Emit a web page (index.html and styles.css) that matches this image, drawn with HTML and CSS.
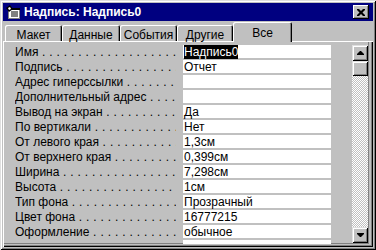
FILE: index.html
```html
<!DOCTYPE html>
<html lang="ru">
<head>
  <meta charset="UTF-8">
  <title>Надпись: Надпись0</title>
  <link rel="stylesheet" href="styles.css">
</head>
<body>
  <div class="window">
    <!-- title bar -->
    <div class="titlebar">
      <svg class="app-icon" viewBox="0 0 16 16" width="16" height="16">
        <rect x="3.5" y="4.5" width="11" height="10" fill="#fff" stroke="#808080"/>
        <rect x="3" y="4" width="12" height="2" fill="#000"/>
        <path d="M6 8h7M6 10h7M6 12h7" stroke="#000" stroke-width="1"/>
        <path d="M1 4 L5 1 L8 5 L4 8 Z" fill="#000"/>
        <path d="M3 4 L5 3 L6 5 L4 6 Z" fill="#fff"/>
      </svg>
      <span class="title">Надпись: Надпись0</span>
      <button class="close">
        <svg viewBox="0 0 8 7" width="8" height="7">
          <path d="M0 0h2l2 2 2-2h2v1L5.5 3.5 8 6v1H6L4 5 2 7H0V6l2.5-2.5L0 1z" fill="#000"/>
        </svg>
      </button>
    </div>

    <!-- tabs -->
    <div class="tabs">
      <div class="tab">Макет</div>
      <div class="tab">Данные</div>
      <div class="tab">События</div>
      <div class="tab">Другие</div>
      <div class="tab active">Все</div>
    </div>

    <!-- property list -->
    <div class="panel">
      <div class="list">
        <div class="rows">
          <div class="row"><span class="label">Имя</span><span class="value"><span class="selected">Надпись0</span></span></div>
          <div class="row"><span class="label">Подпись</span><span class="value">Отчет</span></div>
          <div class="row"><span class="label">Адрес гиперссылки</span><span class="value"></span></div>
          <div class="row"><span class="label">Дополнительный адрес</span><span class="value"></span></div>
          <div class="row"><span class="label">Вывод на экран</span><span class="value">Да</span></div>
          <div class="row"><span class="label">По вертикали</span><span class="value">Нет</span></div>
          <div class="row"><span class="label">От левого края</span><span class="value">1,3см</span></div>
          <div class="row"><span class="label">От верхнего края</span><span class="value">0,399см</span></div>
          <div class="row"><span class="label">Ширина</span><span class="value">7,298см</span></div>
          <div class="row"><span class="label">Высота</span><span class="value">1см</span></div>
          <div class="row"><span class="label">Тип фона</span><span class="value">Прозрачный</span></div>
          <div class="row"><span class="label">Цвет фона</span><span class="value">16777215</span></div>
          <div class="row"><span class="label">Оформление</span><span class="value">обычное</span></div>
          <div class="row blank"><span class="label"></span><span class="value"></span></div>
        </div>

        <div class="scrollbar">
          <div class="sb-btn">
            <svg viewBox="0 0 7 4" width="7" height="4"><path d="M3 0h1l3 3v1H0V3z" fill="#000"/></svg>
          </div>
          <div class="thumb"></div>
          <div class="track"></div>
          <div class="sb-btn">
            <svg viewBox="0 0 7 4" width="7" height="4"><path d="M0 0h7v1L4 4H3L0 1z" fill="#000"/></svg>
          </div>
        </div>
      </div>
    </div>
  </div>
</body>
</html>
```

FILE: styles.css
```css
body {
  margin: 0;
  background: #c0c0c0;
  font-family: "Liberation Sans", Arial, sans-serif;
  font-size: 12px;
  color: #000;
}
.window {
  width: 376px;
  height: 250px;
  box-sizing: border-box;
  padding: 3px;
  display: flex;
  flex-direction: column;
  background: #c0c0c0;
  box-shadow: inset 1px 1px #dfdfdf, inset -1px -1px #000,
              inset 2px 2px #fff, inset -2px -2px #808080;
}
.titlebar {
  height: 18px;
  flex: none;
  display: flex;
  align-items: center;
  padding-left: 2px;
  background: #000080;
  color: #fff;
}
.app-icon {
  margin-right: 3px;
}
.title {
  flex: 1;
  font-weight: bold;
  font-size: 12px;
}
.close {
  width: 16px;
  height: 14px;
  margin-right: 4px;
  padding: 0;
  border: 0;
  display: flex;
  align-items: center;
  justify-content: center;
  background: #c0c0c0;
  box-shadow: inset -1px -1px #000, inset 1px 1px #fff, inset -2px -2px #808080;
}
.tabs {
  height: 20px;
  flex: none;
  display: flex;
  align-items: flex-end;
  padding-left: 2px;
  position: relative;
  z-index: 1;
}
.tab {
  width: 57px;
  height: 16px;
  box-sizing: border-box;
  padding-top: 4px;
  line-height: 12px;
  text-align: center;
  background: #c0c0c0;
  border-radius: 2px 2px 0 0;
  box-shadow: inset 1px 1px #fff, inset -1px 0 #000, inset -2px 0 #808080;
}
.tab:nth-child(2) { width: 58px; }
.tab:nth-child(4) { width: 56px; }
.tab.active {
  width: 59px;
  height: 20px;
  margin-bottom: -1px;
  padding-top: 5px;
}
.panel {
  flex: 1;
  min-height: 0;
  display: flex;
  padding: 1px 4px 3px 1px;
  box-shadow: inset 1px 1px #fff, inset -1px -1px #000, inset -2px -2px #808080;
}
.list {
  flex: 1;
  display: flex;
  overflow: hidden;
  box-shadow: inset -1px -1px #808080;
}
.rows {
  width: 316px;
  padding: 3px 0 0 11px;
}
.row {
  height: 15px;
  display: grid;
  grid-template-columns: 168px 148px;
  line-height: 14px;
}
.label {
  width: 161px;
  white-space: nowrap;
  overflow: hidden;
}
.label::after {
  content: " . . . . . . . . . . . . . . . . . . . . . . . . . . . . . . . . . . . . . . . .";
  letter-spacing: 0.3px;
}
.blank .label::after {
  content: none;
}
.value {
  height: 13px;
  padding-left: 1px;
  background: #fff;
  white-space: nowrap;
}
.selected {
  background: #000;
  color: #fff;
}
.scrollbar {
  width: 16px;
  height: 198px;
  margin: 3px 1px 0 auto;
  display: flex;
  flex-direction: column;
}
.sb-btn, .thumb {
  width: 16px;
  height: 16px;
  flex: none;
  box-sizing: border-box;
  display: flex;
  align-items: center;
  justify-content: center;
  background: #c0c0c0;
  box-shadow: inset 1px 1px #dfdfdf, inset -1px -1px #000,
              inset 2px 2px #fff, inset -2px -2px #808080;
}
.thumb {
  height: 15px;
}
.track {
  flex: 1;
  background: repeating-conic-gradient(#c0c0c0 0 25%, #fff 0 50%) 0 0 / 2px 2px;
}
```
